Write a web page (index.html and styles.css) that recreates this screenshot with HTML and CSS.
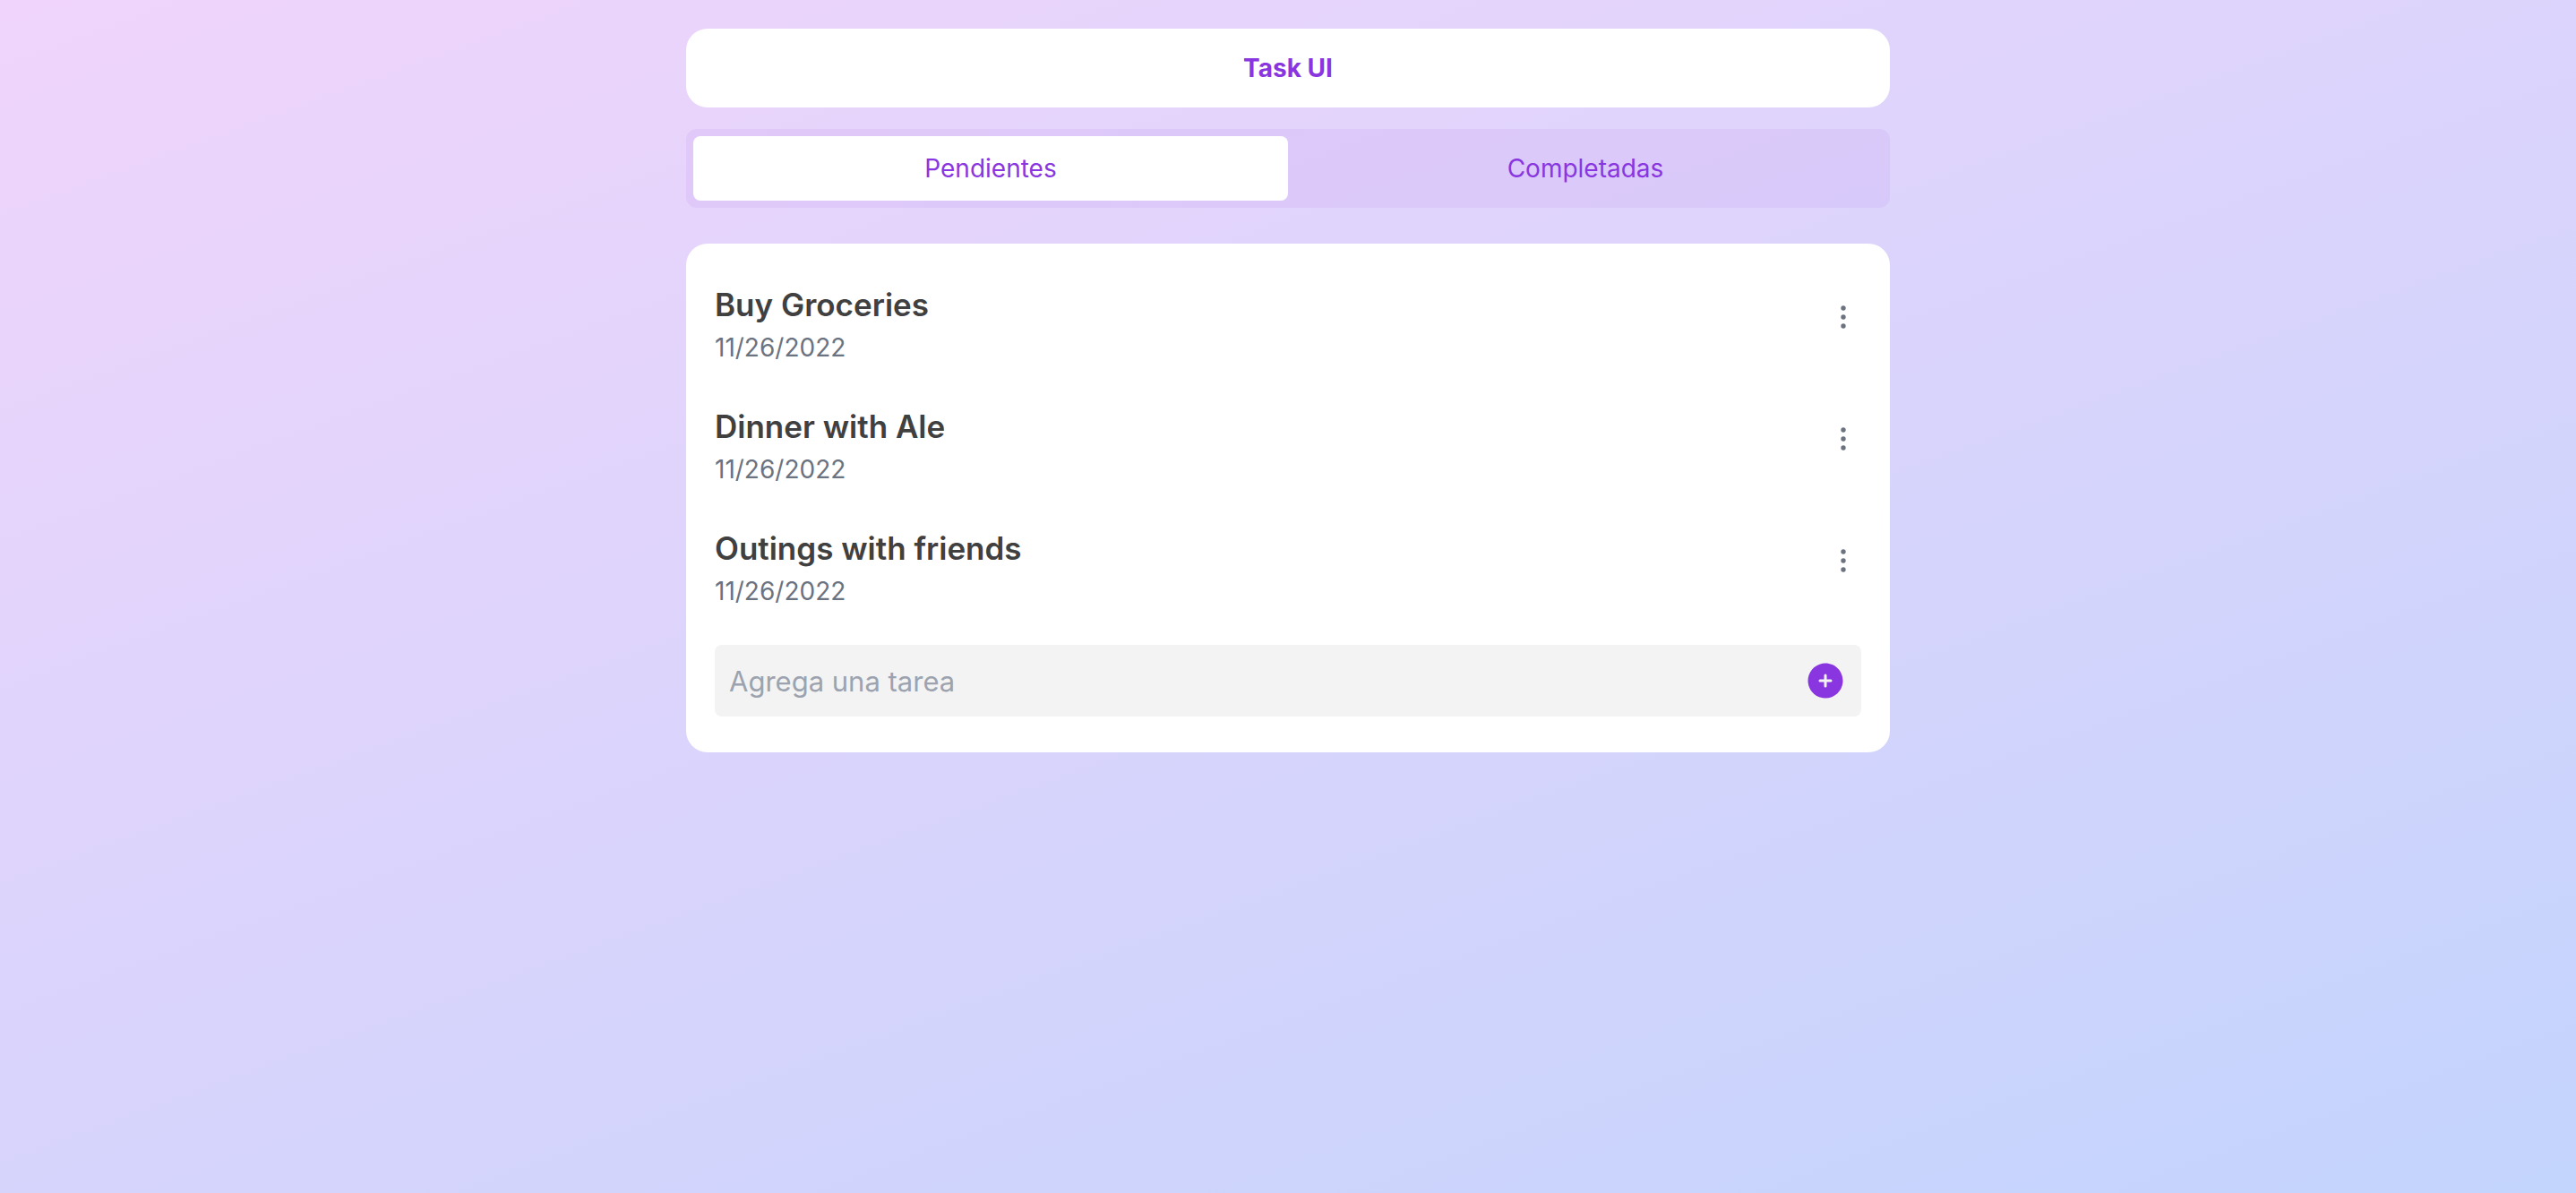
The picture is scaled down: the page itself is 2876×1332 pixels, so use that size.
FILE: index.html
```html
<!DOCTYPE html>
<html lang="es">
<head>
  <meta charset="utf-8">
  <meta name="viewport" content="width=device-width, initial-scale=1">
  <title>Task UI</title>
  <link rel="stylesheet" href="styles.css">
</head>
<body>
  <main class="app">
    <header class="header">
      <h1 class="header-title">Task UI</h1>
    </header>

    <nav class="tabs" role="tablist" aria-label="Tareas">
      <button class="tab tab-active" type="button" role="tab" aria-selected="true">Pendientes</button>
      <button class="tab" type="button" role="tab" aria-selected="false">Completadas</button>
    </nav>

    <section class="card">
      <ul class="tasks">
        <li class="task">
          <div class="task-text">
            <h2 class="task-title">Buy Groceries</h2>
            <time class="task-date" datetime="2022-11-26">11/26/2022</time>
          </div>
          <button class="icon-button" type="button" aria-label="Opciones">
            <svg class="icon-dots" viewBox="0 0 16 16" fill="currentColor"><circle cx="8" cy="3" r="1.35"/><circle cx="8" cy="8" r="1.35"/><circle cx="8" cy="13" r="1.35"/></svg>
          </button>
        </li>
        <li class="task">
          <div class="task-text">
            <h2 class="task-title">Dinner with Ale</h2>
            <time class="task-date" datetime="2022-11-26">11/26/2022</time>
          </div>
          <button class="icon-button" type="button" aria-label="Opciones">
            <svg class="icon-dots" viewBox="0 0 16 16" fill="currentColor"><circle cx="8" cy="3" r="1.35"/><circle cx="8" cy="8" r="1.35"/><circle cx="8" cy="13" r="1.35"/></svg>
          </button>
        </li>
        <li class="task">
          <div class="task-text">
            <h2 class="task-title">Outings with friends</h2>
            <time class="task-date" datetime="2022-11-26">11/26/2022</time>
          </div>
          <button class="icon-button" type="button" aria-label="Opciones">
            <svg class="icon-dots" viewBox="0 0 16 16" fill="currentColor"><circle cx="8" cy="3" r="1.35"/><circle cx="8" cy="8" r="1.35"/><circle cx="8" cy="13" r="1.35"/></svg>
          </button>
        </li>
      </ul>

      <form class="add-form">
        <input class="add-input" type="text" placeholder="Agrega una tarea" aria-label="Agrega una tarea">
        <button class="add-button" type="submit" aria-label="Agregar">
          <svg class="icon-plus" viewBox="0 0 24 24" fill="currentColor"><path fill-rule="evenodd" clip-rule="evenodd" d="M12 2.25c-5.385 0-9.75 4.365-9.75 9.75s4.365 9.75 9.75 9.75 9.75-4.365 9.75-9.75S17.385 2.25 12 2.25zM12.75 9a.75.75 0 00-1.5 0v2.25H9a.75.75 0 000 1.5h2.25V15a.75.75 0 001.5 0v-2.25H15a.75.75 0 000-1.5h-2.25V9z"/></svg>
        </button>
      </form>
    </section>
  </main>
</body>
</html>
```

FILE: styles.css
```css
*,
*::before,
*::after {
  box-sizing: border-box;
}

body {
  margin: 0;
  min-height: 100vh;
  background: linear-gradient(160deg, #f0d4fb, #c3d4fd);
  font-family: Inter, "Liberation Sans", sans-serif;
  font-size: 28px;
  line-height: 40px;
}

h1,
h2,
ul {
  margin: 0;
  padding: 0;
}

button {
  padding: 0;
  border: 0;
  background: none;
  font: inherit;
  color: inherit;
  cursor: pointer;
}

.app {
  max-width: 1344px;
  margin: 0 auto;
  padding: 32px 0;
}

.header {
  padding: 24px 32px;
  border-radius: 24px;
  background: #fff;
  text-align: center;
}

.header-title {
  color: #8936e0;
  font-size: 28px;
  font-weight: 700;
}

.tabs {
  display: flex;
  margin-top: 24px;
  padding: 8px;
  border-radius: 12px;
  background: rgba(137, 54, 224, 0.07);
}

.tab {
  flex: 1;
  padding: 16px;
  border-radius: 8px;
  color: #8936e0;
}

.tab-active {
  background: #fff;
}

.card {
  margin-top: 40px;
  padding: 40px 32px;
  border-radius: 24px;
  background: #fff;
}

.tasks {
  display: grid;
  gap: 40px;
  list-style: none;
}

.task {
  display: flex;
  justify-content: space-between;
  align-items: center;
}

.task-text {
  display: grid;
}

.task-title {
  color: #404040;
  font-size: 35px;
  font-weight: 600;
  line-height: 56px;
}

.task-date {
  color: #6b7280;
}

.icon-button {
  display: flex;
  padding: 0 4px 12px;
  color: #6b7280;
}

.icon-dots {
  width: 32px;
  height: 32px;
}

.add-form {
  display: flex;
  align-items: center;
  margin-top: 40px;
  padding: 16px;
  border-radius: 8px;
  background: #f3f3f3;
}

.add-input {
  flex: 1;
  min-width: 0;
  height: 48px;
  padding: 0;
  border: 0;
  outline: 0;
  background: none;
  color: #404040;
  font: inherit;
  font-size: 31px;
}

.add-input::placeholder {
  color: #9ca3af;
  opacity: 1;
}

.add-button {
  display: flex;
  color: #8936e0;
}

.icon-plus {
  width: 48px;
  height: 48px;
}
```
